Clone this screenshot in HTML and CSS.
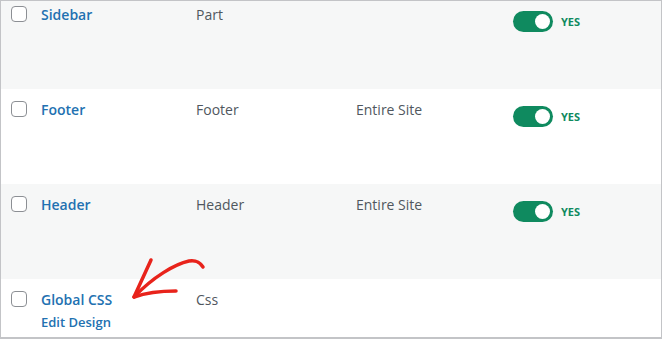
FILE: index.html
```html
<!DOCTYPE html>
<html>
<head>
<meta charset="utf-8">
<link rel="stylesheet" href="styles.css">
</head>
<body>
<div class="frame">
  <div class="table">
    <div class="row alt first">
      <div class="cb"><span class="box"></span></div>
      <div class="title"><a>Sidebar</a></div>
      <div class="type">Part</div>
      <div class="cond"></div>
      <div class="status"><span class="toggle"><span class="knob"></span></span><span class="yes">YES</span></div>
    </div>
    <div class="row">
      <div class="cb"><span class="box"></span></div>
      <div class="title"><a>Footer</a></div>
      <div class="type">Footer</div>
      <div class="cond">Entire Site</div>
      <div class="status"><span class="toggle"><span class="knob"></span></span><span class="yes">YES</span></div>
    </div>
    <div class="row alt">
      <div class="cb"><span class="box"></span></div>
      <div class="title"><a>Header</a></div>
      <div class="type">Header</div>
      <div class="cond">Entire Site</div>
      <div class="status"><span class="toggle"><span class="knob"></span></span><span class="yes">YES</span></div>
    </div>
    <div class="row last">
      <div class="cb"><span class="box"></span></div>
      <div class="title"><a>Global CSS</a><a class="edit">Edit Design</a></div>
      <div class="type">Css</div>
      <div class="cond"></div>
      <div class="status"></div>
    </div>
  </div>
  <svg class="arrow" width="90" height="60" viewBox="0 0 90 60">
    <path d="M72 26 C68 20 64 19 58 20 C44 23 22 36 3 56" fill="none" stroke="#e8231b" stroke-width="3.5" stroke-linecap="round"/>
    <path d="M20 19 C14 32 8 45 3 56 C17 51 30 50 45 50" fill="none" stroke="#e8231b" stroke-width="3.5" stroke-linecap="round" stroke-linejoin="round"/>
  </svg>
</div>
</body>
</html>
```
FILE: styles.css
```css
html, body {
  margin: 0;
  padding: 0;
  background: #ffffff;
}
.frame {
  position: relative;
  width: 660px;
  height: 336px;
  border-top: 1px solid #c3c4c7;
  border-left: 1px solid #c3c4c7;
  border-right: 2px solid #c3c4c7;
  border-bottom: 2px solid #c3c4c7;
  overflow: hidden;
  font-family: "Open Sans", sans-serif;
}
.table {
  margin-top: -7px;
}
.row {
  display: flex;
  height: 95px;
  box-sizing: border-box;
  padding-top: 9px;
  background: #ffffff;
}
.row.alt {
  background: #f6f7f7;
}
.cb {
  width: 40px;
  padding-left: 10px;
  box-sizing: border-box;
  padding-top: 3px;
}
.box {
  display: block;
  width: 16px;
  height: 16px;
  box-sizing: border-box;
  border: 1px solid #8c8f94;
  border-radius: 4px;
  background: #fff;
}
.title {
  width: 155px;
  display: flex;
  flex-direction: column;
}
.title a {
  color: #2271b1;
  font-weight: 600;
  font-size: 14px;
  line-height: 23px;
}
.title a.edit {
  font-size: 13px;
}
.type, .cond {
  color: #50575e;
  font-size: 14px;
  line-height: 23px;
  font-weight: 500;
}
.type {
  width: 160px;
}
.cond {
  width: 157px;
}
.status {
  display: flex;
  align-items: center;
  gap: 8px;
  height: 21px;
  padding-top: 8px;
}
.toggle {
  display: flex;
  justify-content: flex-end;
  align-items: center;
  width: 40px;
  height: 21px;
  box-sizing: border-box;
  padding-right: 3px;
  border-radius: 11px;
  background: #0f8a5f;
}
.knob {
  display: block;
  width: 15px;
  height: 15px;
  border-radius: 50%;
  background: #fff;
}
.yes {
  color: #0f8a5f;
  font-weight: 700;
  font-size: 11px;
}
.arrow {
  position: absolute;
  left: 130px;
  top: 240px;
}
```
